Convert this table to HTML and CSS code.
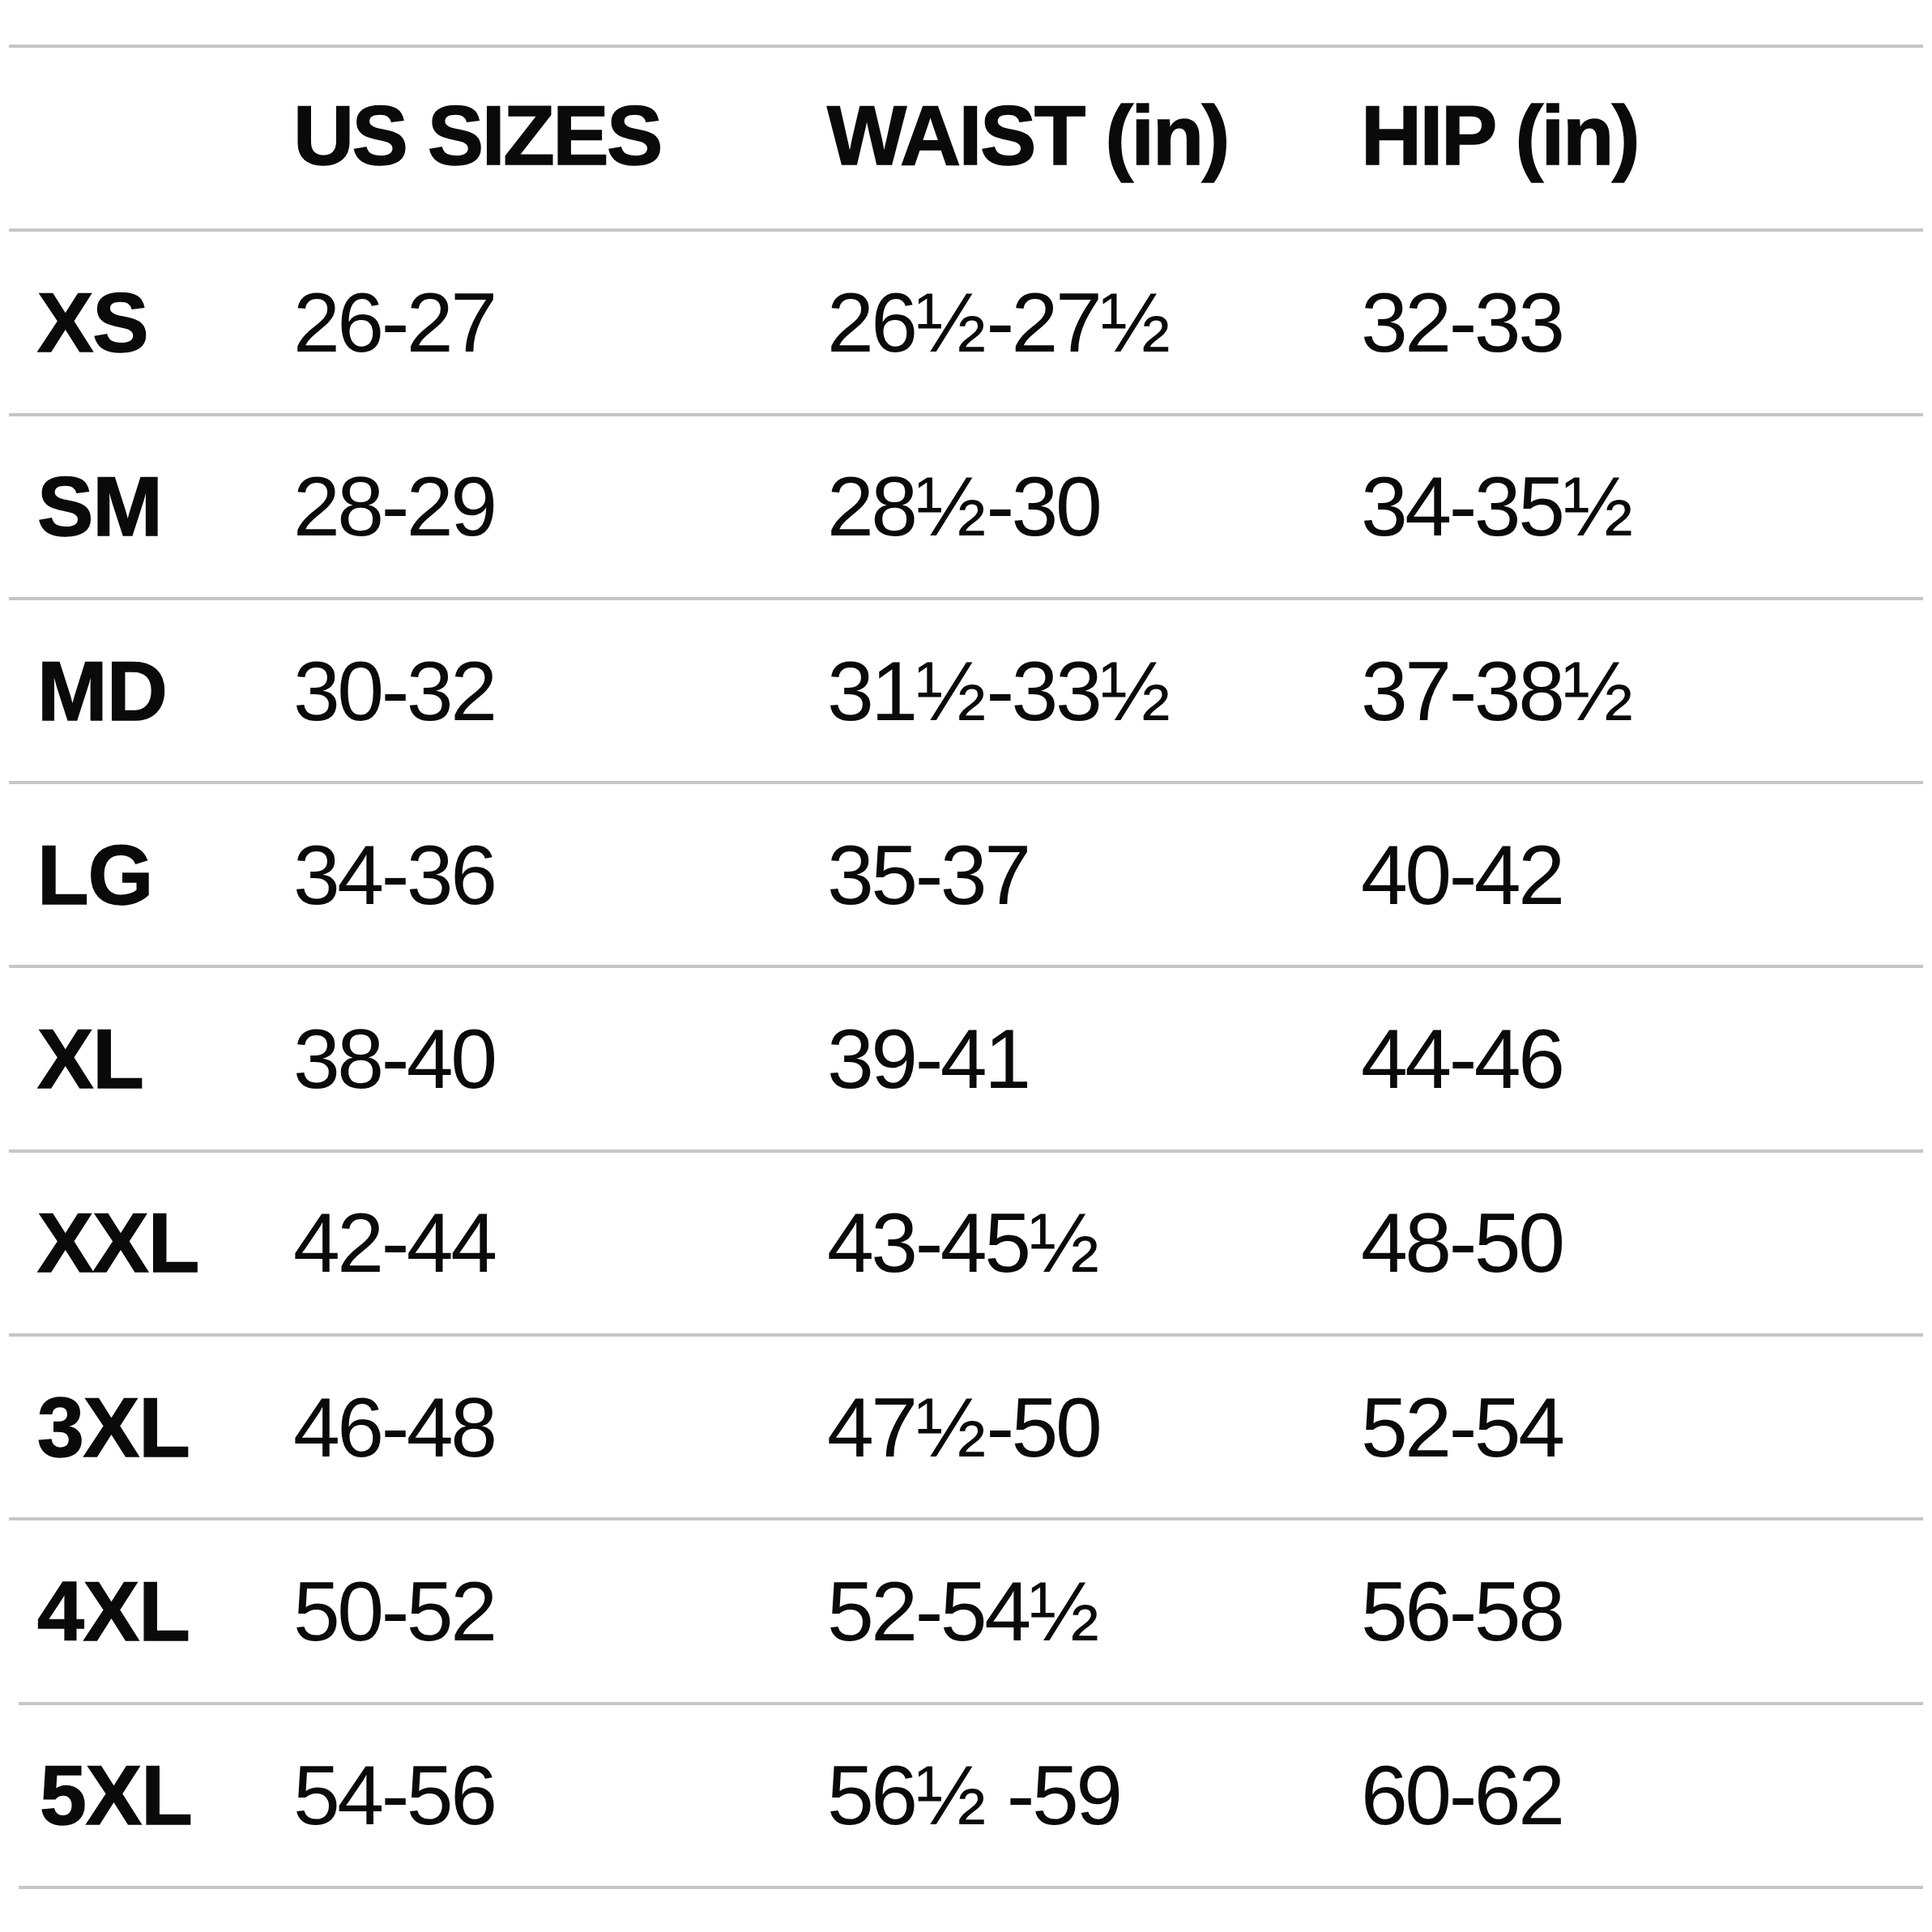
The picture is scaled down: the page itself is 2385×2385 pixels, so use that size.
FILE: index.html
```html
<!DOCTYPE html>
<html lang="en">
<head>
<meta charset="utf-8">
<title>Size Chart</title>
<link rel="stylesheet" href="styles.css">
</head>
<body>
<div class="chart">
  <div class="row head">
    <div class="cell label"></div>
    <div class="cell">US SIZES</div>
    <div class="cell">WAIST (in)</div>
    <div class="cell">HIP (in)</div>
  </div>
  <div class="row">
    <div class="cell label">XS</div>
    <div class="cell val">26-27</div>
    <div class="cell val">26<span class="frac">½</span>-27<span class="frac">½</span></div>
    <div class="cell val">32-33</div>
  </div>
  <div class="row">
    <div class="cell label">SM</div>
    <div class="cell val">28-29</div>
    <div class="cell val">28<span class="frac">½</span>-30</div>
    <div class="cell val">34-35<span class="frac">½</span></div>
  </div>
  <div class="row">
    <div class="cell label">MD</div>
    <div class="cell val">30-32</div>
    <div class="cell val">31<span class="frac">½</span>-33<span class="frac">½</span></div>
    <div class="cell val">37-38<span class="frac">½</span></div>
  </div>
  <div class="row">
    <div class="cell label">LG</div>
    <div class="cell val">34-36</div>
    <div class="cell val">35-37</div>
    <div class="cell val">40-42</div>
  </div>
  <div class="row">
    <div class="cell label">XL</div>
    <div class="cell val">38-40</div>
    <div class="cell val">39-41</div>
    <div class="cell val">44-46</div>
  </div>
  <div class="row">
    <div class="cell label">XXL</div>
    <div class="cell val">42-44</div>
    <div class="cell val">43-45<span class="frac">½</span></div>
    <div class="cell val">48-50</div>
  </div>
  <div class="row">
    <div class="cell label">3XL</div>
    <div class="cell val">46-48</div>
    <div class="cell val">47<span class="frac">½</span>-50</div>
    <div class="cell val">52-54</div>
  </div>
  <div class="row">
    <div class="cell label">4XL</div>
    <div class="cell val">50-52</div>
    <div class="cell val">52-54<span class="frac">½</span></div>
    <div class="cell val">56-58</div>
  </div>
  <div class="row last">
    <div class="cell label">5XL</div>
    <div class="cell val">54-56</div>
    <div class="cell val">56<span class="frac">½</span> -59</div>
    <div class="cell val">60-62</div>
  </div>
</div>
</body>
</html>
```

FILE: styles.css
```css
html, body {
  margin: 0;
  padding: 0;
  background: #ffffff;
}

body {
  font-family: "Liberation Sans", Arial, sans-serif;
  color: #0a0a0a;
}

.chart {
  margin: 55px 11px 0 11px;
  display: flex;
  flex-direction: column;
}

.row {
  box-sizing: border-box;
  height: 227.3px;
  border-top: 4px solid #c6c6c6;
  display: grid;
  grid-template-columns: 351px 659px 659px 1fr;
  align-items: center;
}

.row.last {
  margin-left: 12px;
  grid-template-columns: 339px 659px 659px 1fr;
  border-bottom: 4px solid #c6c6c6;
  height: 231.3px;
}

.cell {
  font-size: 104px;
  line-height: 1;
  white-space: nowrap;
}

.head .cell {
  font-weight: 700;
  letter-spacing: -2.5px;
  -webkit-text-stroke: 1.5px #0a0a0a;
  padding-bottom: 8px;
}

.label {
  padding-left: 35px;
  font-weight: 700;
  -webkit-text-stroke: 1.5px #0a0a0a;
  letter-spacing: -1px;
}

.row.last .label {
  padding-left: 26px;
}

.val {
  font-weight: 400;
  letter-spacing: -3.5px;
}

.frac {
  letter-spacing: 0;
  margin-left: 1px;
}
```
